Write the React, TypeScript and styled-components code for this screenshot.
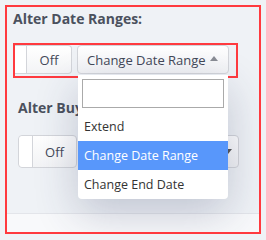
import styled, { createGlobalStyle } from "styled-components";

const Global = createGlobalStyle`
  html, body {
    margin: 0;
    padding: 0;
    background: #eff2f6;
    font-family: "Open Sans", "Liberation Sans", sans-serif;
  }
`;

const options = ["Extend", "Change Date Range", "Change End Date"];

function Toggle({ cut }: { cut?: boolean }) {
  return (
    <S.Toggle $cut={cut}>
      <span className="handle" />
      <span className="label">Off</span>
    </S.Toggle>
  );
}

export default function App() {
  return (
    <>
      <Global />
      <S.Panel>
        <S.Title>Alter Date Ranges:</S.Title>
        <S.Highlight>
          <Toggle cut />
          <S.Select $width={152}>
            <span>Change Date Range</span>
            <S.Caret $up />
            <S.Dropdown>
              <div className="search">
                <input type="text" />
              </div>
              <ul>
                {options.map((o) => (
                  <S.Option key={o} $active={o === "Change Date Range"}>
                    {o}
                  </S.Option>
                ))}
              </ul>
            </S.Dropdown>
          </S.Select>
        </S.Highlight>

        <S.Section>
          <S.Label>Alter Buy</S.Label>
          <S.Row>
            <Toggle />
            {/* value sits under the open dropdown */}
            <S.Select $width={157}>
              <span />
              <S.Caret />
            </S.Select>
          </S.Row>
        </S.Section>
        <S.Footer />
      </S.Panel>
    </>
  );
}

const S = {
  Panel: styled.div`
    box-sizing: border-box;
    margin: 5px;
    height: 229px;
    border: 2px solid #ff3a3f;
    display: flex;
    flex-direction: column;
    padding: 2px 0 0 6px;
    overflow: hidden;
  `,
  Title: styled.h4`
    margin: 0;
    font-size: 14px;
    line-height: 20px;
    font-weight: 700;
    color: #4b515e;
  `,
  Highlight: styled.div`
    display: flex;
    gap: 5px;
    width: 225px;
    box-sizing: border-box;
    height: 35px;
    margin-top: 14px;
    border: 2px solid #ff3a3f;
    padding: 0 0 2px 0;
    position: relative;
    z-index: 2;
  `,
  Section: styled.div`
    padding-left: 5px;
    margin-top: 20px;
  `,
  Label: styled.div`
    font-size: 14px;
    line-height: 20px;
    font-weight: 700;
    color: #4b515e;
    white-space: nowrap;
  `,
  Row: styled.div`
    display: flex;
    gap: 5px;
    margin-top: 17px;
    height: 33px;
  `,
  Toggle: styled.div<{ $cut?: boolean }>`
    display: flex;
    box-sizing: border-box;
    width: ${(p) => (p.$cut ? 57 : 59)}px;
    border: 1px solid #d3d5da;
    border-left: ${(p) => (p.$cut ? "none" : "1px solid #d3d5da")};
    border-radius: ${(p) => (p.$cut ? "0 4px 4px 0" : "4px")};
    background: linear-gradient(180deg, #ffffff 0%, #f3f4f6 100%);
    .handle {
      width: ${(p) => (p.$cut ? 11 : 13)}px;
      background: #fff;
      border-right: 1px solid #d3d5da;
      border-radius: ${(p) => (p.$cut ? "0" : "4px 0 0 4px")};
    }
    .label {
      flex: 1;
      display: flex;
      align-items: center;
      justify-content: center;
      font-size: 13px;
      color: #434858;
    }
  `,
  Select: styled.div<{ $width: number }>`
    position: relative;
    box-sizing: border-box;
    width: ${(p) => p.$width}px;
    display: flex;
    align-items: center;
    padding: 0 10px 0 9px;
    border: 1px solid #d3d5da;
    border-radius: 4px;
    background: linear-gradient(180deg, #ffffff 0%, #f1f2f5 100%);
    font-size: 13px;
    color: #434858;
    span {
      flex: 1;
      white-space: nowrap;
    }
  `,
  Caret: styled.i<{ $up?: boolean }>`
    width: 0;
    height: 0;
    border-left: 4px solid transparent;
    border-right: 4px solid transparent;
    ${(p) =>
      p.$up
        ? "border-bottom: 5px solid #8a8d94; margin-top: -2px;"
        : "border-top: 5px solid #555; margin-right: -4px;"}
  `,
  Dropdown: styled.div`
    position: absolute;
    top: 100%;
    left: 0;
    right: 0;
    margin-top: 2px;
    background: #fff;
    border-radius: 0 0 4px 4px;
    box-shadow: 0 14px 44px rgba(40, 50, 90, 0.24);
    .search {
      padding: 4px;
    }
    input {
      display: block;
      box-sizing: border-box;
      width: 100%;
      height: 29px;
      border: 1px solid #aaa;
      outline: none;
    }
    ul {
      list-style: none;
      margin: 0;
      padding: 0;
    }
  `,
  Option: styled.li<{ $active?: boolean }>`
    height: 29px;
    line-height: 29px;
    padding: 0 6px;
    font-size: 12.5px;
    white-space: nowrap;
    color: ${(p) => (p.$active ? "#fff" : "#333")};
    background: ${(p) => (p.$active ? "#5897fb" : "transparent")};
  `,
  Footer: styled.div`
    margin: auto 0 0 -6px;
    height: 18px;
    background: #f8f9fb;
    border-top: 1px solid #e3e5ea;
  `,
};
